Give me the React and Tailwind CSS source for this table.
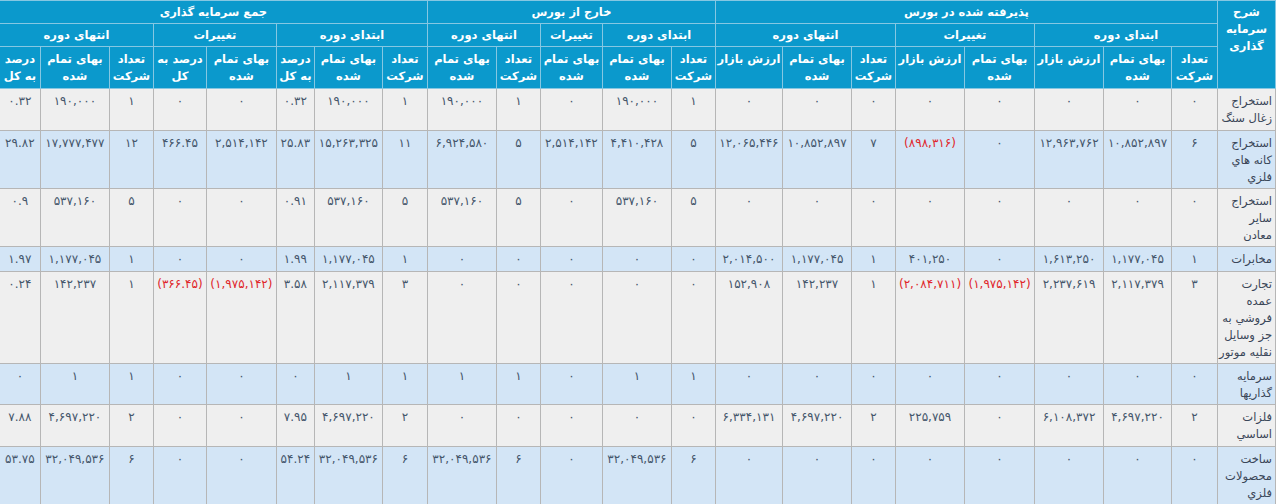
import React from "react";

const widths = [58, 46, 68, 69, 70, 69, 44, 69, 67, 44, 69, 62, 44, 69, 45, 68, 38, 70, 53, 44, 69, 41];

const rows = [
  {
    name: ["استخراج", "زغال سنگ"],
    h: 42,
    cells: ["۰", "۰", "۰", "۰", "۰", "۰", "۰", "۰", "۱", "۱۹۰,۰۰۰", "۰", "۱", "۱۹۰,۰۰۰", "۱", "۱۹۰,۰۰۰", "۰.۳۲", "۰", "۰", "۱", "۱۹۰,۰۰۰", "۰.۳۲"],
  },
  {
    name: ["استخراج", "کانه هاي", "فلزي"],
    h: 58,
    cells: ["۶", "۱۰,۸۵۲,۸۹۷", "۱۲,۹۶۳,۷۶۲", "۰", "(۸۹۸,۳۱۶)", "۷", "۱۰,۸۵۲,۸۹۷", "۱۲,۰۶۵,۴۴۶", "۵", "۴,۴۱۰,۴۲۸", "۲,۵۱۴,۱۴۲", "۵", "۶,۹۲۴,۵۸۰", "۱۱", "۱۵,۲۶۳,۳۲۵", "۲۵.۸۳", "۲,۵۱۴,۱۴۲", "۴۶۶.۴۵", "۱۲", "۱۷,۷۷۷,۴۷۷", "۲۹.۸۲"],
  },
  {
    name: ["استخراج", "سایر", "معادن"],
    h: 58,
    cells: ["۰", "۰", "۰", "۰", "۰", "۰", "۰", "۰", "۵", "۵۳۷,۱۶۰", "۰", "۵", "۵۳۷,۱۶۰", "۵", "۵۳۷,۱۶۰", "۰.۹۱", "۰", "۰", "۵", "۵۳۷,۱۶۰", "۰.۹"],
  },
  {
    name: ["مخابرات"],
    h: 25,
    cells: ["۱", "۱,۱۷۷,۰۴۵", "۱,۶۱۳,۲۵۰", "۰", "۴۰۱,۲۵۰", "۱", "۱,۱۷۷,۰۴۵", "۲,۰۱۴,۵۰۰", "۰", "۰", "۰", "۰", "۰", "۱", "۱,۱۷۷,۰۴۵", "۱.۹۹", "۰", "۰", "۱", "۱,۱۷۷,۰۴۵", "۱.۹۷"],
  },
  {
    name: ["تجارت", "عمده", "فروشي به", "جز وسايل", "نقليه موتور"],
    h: 92,
    cells: ["۳", "۲,۱۱۷,۳۷۹", "۲,۲۳۷,۶۱۹", "(۱,۹۷۵,۱۴۲)", "(۲,۰۸۴,۷۱۱)", "۱", "۱۴۲,۲۳۷", "۱۵۲,۹۰۸", "۰", "۰", "۰", "۰", "۰", "۳", "۲,۱۱۷,۳۷۹", "۳.۵۸", "(۱,۹۷۵,۱۴۲)", "(۳۶۶.۴۵)", "۱", "۱۴۲,۲۳۷", "۰.۲۴"],
  },
  {
    name: ["سرمایه", "گذاریها"],
    h: 41,
    cells: ["۰", "۰", "۰", "۰", "۰", "۰", "۰", "۰", "۱", "۱", "۰", "۱", "۱", "۱", "۱", "۰", "۰", "۰", "۱", "۱", "۰"],
  },
  {
    name: ["فلزات", "اساسي"],
    h: 42,
    cells: ["۲", "۴,۶۹۷,۲۲۰", "۶,۱۰۸,۳۷۲", "۰", "۲۲۵,۷۵۹", "۲", "۴,۶۹۷,۲۲۰", "۶,۳۳۴,۱۳۱", "۰", "۰", "۰", "۰", "۰", "۲", "۴,۶۹۷,۲۲۰", "۷.۹۵", "۰", "۰", "۲", "۴,۶۹۷,۲۲۰", "۷.۸۸"],
  },
  {
    name: ["ساخت", "محصولات", "فلزي"],
    h: 58,
    cells: ["۰", "۰", "۰", "۰", "۰", "۰", "۰", "۰", "۶", "۳۲,۰۴۹,۵۳۶", "۰", "۶", "۳۲,۰۴۹,۵۳۶", "۶", "۳۲,۰۴۹,۵۳۶", "۵۴.۲۴", "۰", "۰", "۶", "۳۲,۰۴۹,۵۳۶", "۵۳.۷۵"],
  },
];

const th = "border border-[#86c7e2] text-white font-bold text-center px-0 leading-[17px] text-[11.5px]";

const App = () => {
  return (
    <div dir="rtl" className="w-[1276px] bg-white" style={{ fontFamily: '"DejaVu Sans", sans-serif' }}>
      <table className="w-[1276px] table-fixed border-collapse text-[12px]">
        <colgroup>
          {widths.map((w, i) => (
            <col key={i} style={{ width: w }} />
          ))}
        </colgroup>
        <thead className="bg-[#0b99cc]">
          <tr className="h-[23px]">
            <th rowSpan={3} className={`${th} align-top pt-[3px]`}>
              شرح
              <br />
              سرمایه
              <br />
              گذاری
            </th>
            <th colSpan={8} className={th}>پذیرفته شده در بورس</th>
            <th colSpan={5} className={th}>خارج از بورس</th>
            <th colSpan={8} className={th}>جمع سرمایه گذاری</th>
          </tr>
          <tr className="h-[23px]">
            <th colSpan={3} className={th}>ابتدای دوره</th>
            <th colSpan={2} className={th}>تغییرات</th>
            <th colSpan={3} className={th}>انتهای دوره</th>
            <th colSpan={2} className={th}>ابتدای دوره</th>
            <th className={th}>تغییرات</th>
            <th colSpan={2} className={th}>انتهای دوره</th>
            <th colSpan={3} className={th}>ابتدای دوره</th>
            <th colSpan={2} className={th}>تغییرات</th>
            <th colSpan={3} className={th}>انتهای دوره</th>
          </tr>
          <tr className="h-[42px]">
            {[
              ["تعداد", "شرکت"], ["بهای تمام", "شده"], ["ارزش بازار"],
              ["بهای تمام", "شده"], ["ارزش بازار"],
              ["تعداد", "شرکت"], ["بهای تمام", "شده"], ["ارزش بازار"],
              ["تعداد", "شرکت"], ["بهای تمام", "شده"],
              ["بهای تمام", "شده"],
              ["تعداد", "شرکت"], ["بهای تمام", "شده"],
              ["تعداد", "شرکت"], ["بهای تمام", "شده"], ["درصد", "به کل"],
              ["بهای تمام", "شده"], ["درصد به", "کل"],
              ["تعداد", "شرکت"], ["بهای تمام", "شده"], ["درصد", "به کل"],
            ].map((lines, i) => (
              <th key={i} className={`${th} align-top pt-[4px] whitespace-nowrap`}>
                {lines.map((l, j) => (
                  <div key={j}>{l}</div>
                ))}
              </th>
            ))}
          </tr>
        </thead>
        <tbody>
          {rows.map((r, i) => (
            <tr key={i} className={i % 2 === 0 ? "bg-[#efefef]" : "bg-[#d3e5f6]"} style={{ height: r.h }}>
              <td className="border border-[#b6b6b6] align-top text-right pr-[3px] pl-0 pt-[4px] leading-[17px] text-[11.5px] text-[#3a4658] whitespace-nowrap">
                {r.name.map((l, j) => (
                  <div key={j}>{l}</div>
                ))}
              </td>
              {r.cells.map((c, j) => (
                <td
                  key={j}
                  className={`border border-[#b6b6b6] align-top text-center px-0 pt-[4px] leading-[17px] whitespace-nowrap ${
                    c.startsWith("(") ? "text-[#e0262b]" : "text-[#45566b]"
                  }`}
                >
                  {c}
                </td>
              ))}
            </tr>
          ))}
        </tbody>
      </table>
    </div>
  );
};

export default App;
